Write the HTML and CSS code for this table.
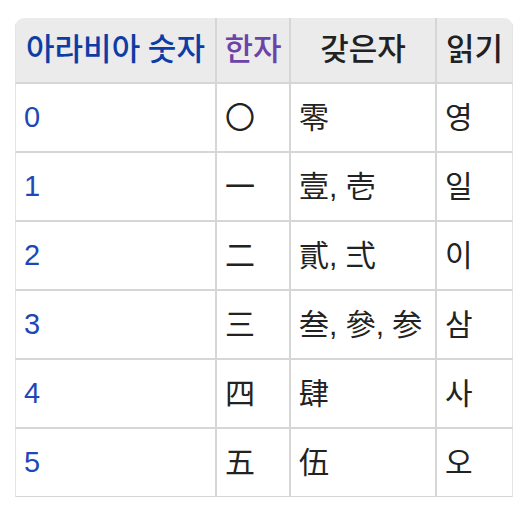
FILE: index.html
```html
<!DOCTYPE html>
<html lang="ko">
<head>
<meta charset="utf-8">
<link rel="stylesheet" href="styles.css">
</head>
<body>
<div class="wrap">
<table class="numtable">
<colgroup><col class="c1"><col class="c2"><col class="c3"><col class="c4"></colgroup>
<thead>
<tr><th class="link">아라비아 숫자</th><th class="visited">한자</th><th>갖은자</th><th>읽기</th></tr>
</thead>
<tbody>
<tr><td class="num">0</td><td>〇</td><td>零</td><td>영</td></tr>
<tr><td class="num">1</td><td>一</td><td>壹, 壱</td><td>일</td></tr>
<tr><td class="num">2</td><td>二</td><td>貳, 弍</td><td>이</td></tr>
<tr><td class="num">3</td><td>三</td><td>叁, 參, 参</td><td>삼</td></tr>
<tr><td class="num">4</td><td>四</td><td>肆</td><td>사</td></tr>
<tr><td class="num">5</td><td>五</td><td>伍</td><td>오</td></tr>
</tbody>
</table>
</div>
</body>
</html>
```
FILE: styles.css
```css
html, body { margin: 0; padding: 0; background: #fff; }
body { font-family: Roboto, "Noto Sans CJK KR", sans-serif; color: #202122; }
.wrap {
  margin: 18px 0 0 15px;
  width: 498px;
  height: 479px;
  overflow: hidden;
  border-radius: 9px 9px 0 0;
}
.numtable {
  border-collapse: separate;
  border-spacing: 0;
  table-layout: fixed;
  width: 498px;
}
.c1 { width: 202px; }
.c2 { width: 74px; }
.c3 { width: 146px; }
.c4 { width: 76px; }
.numtable th, .numtable td {
  padding: 0 8px;
  border-right: 2px solid #d6d6d6;
  border-bottom: 2px solid #d6d6d6;
  white-space: nowrap;
  vertical-align: middle;
  overflow: hidden;
}
.numtable th:first-child, .numtable td:first-child { border-left: 1px solid #e4e4e4; }
.numtable th:last-child, .numtable td:last-child { border-right: 1px solid #e4e4e4; }
.numtable th {
  background: #ebebeb;
  font-size: 31px;
  font-weight: 500;
  line-height: 64px;
  text-align: center;
  padding: 0 4px;
}
.numtable td {
  font-family: "Liberation Sans", "Noto Sans CJK KR", sans-serif;
  font-size: 30px;
  line-height: 67px;
  text-align: left;
  color: #222;
}
.numtable td.num { font-size: 29px; color: #1f47b6; }
.link { color: #0d3da4; }
.visited { color: #6c43a8; }
```
